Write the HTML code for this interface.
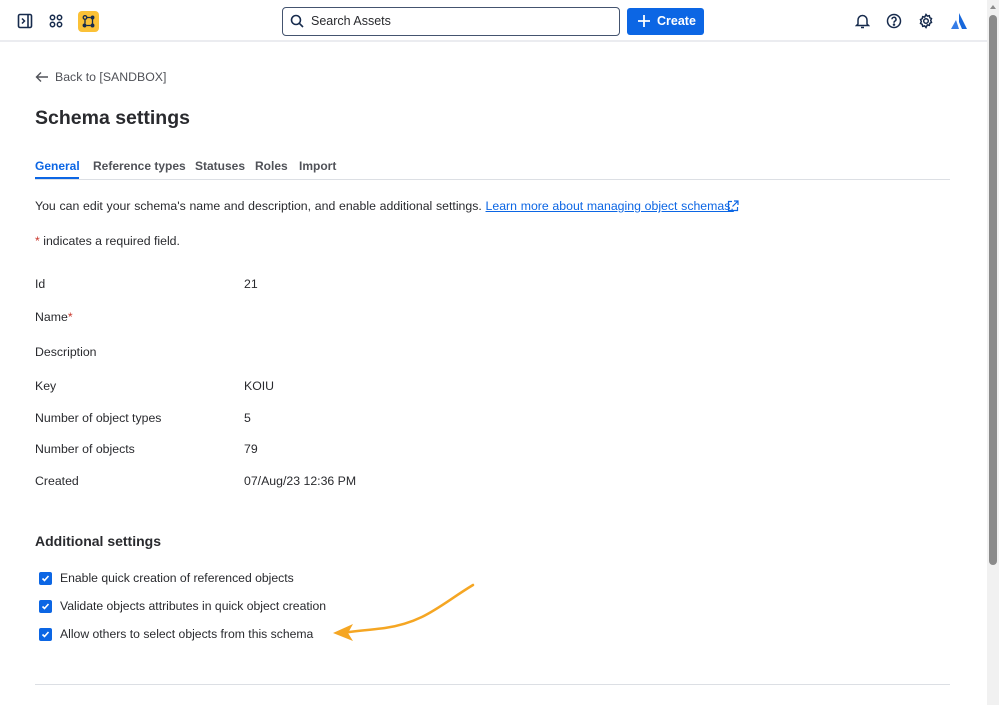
<!DOCTYPE html>
<html><head><meta charset="utf-8"><style>
*{margin:0;padding:0;box-sizing:border-box}
body{width:999px;height:705px;overflow:hidden;background:#fff;font-family:"Liberation Sans",sans-serif;color:#292a2e;position:relative;font-size:12.3px}
.a{position:absolute;white-space:nowrap}
.hdr{position:absolute;left:0;top:0;width:987px;height:42px;border-bottom:2px solid #ebecf0}
.search{position:absolute;left:282px;top:7px;width:338px;height:29px;border:1px solid #44546f;border-radius:4px;font-size:12.5px;padding:6px 0 0 28px}
.create{position:absolute;left:627px;top:8px;width:77px;height:27px;background:#0c66e4;border-radius:3px;color:#fff;font-weight:bold;font-size:12.5px;padding:6px 0 0 30px}
.tab{position:absolute;top:159px;font-size:12px;font-weight:bold;color:#505258}
.lbl{position:absolute;left:35px;font-size:12.3px}
.val{position:absolute;left:244px;font-size:12.3px}
.cb{position:absolute;left:39px;width:13px;height:13px;background:#0c66e4;border-radius:2px}
.cb svg{position:absolute;left:2px;top:2px}
.cbl{position:absolute;left:60px;font-size:12.2px}
</style></head><body>
<div class="hdr"></div>
<svg class="a" style="left:17px;top:13px" width="16" height="16" viewBox="0 0 16 16"><rect x="1.5" y="1.5" width="13" height="13" rx="1.5" fill="none" stroke="#172b4d" stroke-width="1.6"/><path d="M11 2v12" stroke="#172b4d" stroke-width="1.6"/><path d="M5 5.5l2.5 2.5L5 10.5" fill="none" stroke="#172b4d" stroke-width="1.5"/></svg>
<svg class="a" style="left:49px;top:14px" width="14" height="14" viewBox="0 0 14 14" fill="none" stroke="#172b4d" stroke-width="1.5"><circle cx="3.5" cy="3.5" r="2.2"/><circle cx="10.5" cy="3.5" r="2.2"/><circle cx="3.5" cy="10.5" r="2.2"/><circle cx="10.5" cy="10.5" r="2.2"/></svg>
<div class="a" style="left:78px;top:11px;width:21px;height:21px;background:#fbc137;border-radius:4px"></div>
<svg class="a" style="left:81px;top:14px" width="15" height="15" viewBox="0 0 15 15" fill="#172b4d" stroke="#172b4d" stroke-width="1.3"><circle cx="4" cy="3.5" r="1.8" fill="none"/><circle cx="11.5" cy="3.5" r="1.3"/><circle cx="3.5" cy="11.5" r="1.3"/><circle cx="11.5" cy="11.5" r="1.3"/><path d="M4 5.5v4M6 3.5h3.5M11.5 5v5M5.5 11.5h4" fill="none"/></svg>
<div class="search">Search Assets</div>
<svg class="a" style="left:290px;top:14px" width="14" height="14" viewBox="0 0 14 14" fill="none" stroke="#172b4d" stroke-width="1.6"><circle cx="6" cy="6" r="4.5"/><path d="M9.3 9.3L13 13"/></svg>
<div class="create">Create</div>
<svg class="a" style="left:637px;top:14px" width="14" height="14" viewBox="0 0 14 14" stroke="#fff" stroke-width="1.8"><path d="M7 1v12M1 7h12"/></svg>
<svg class="a" style="left:855px;top:13px" width="15" height="16" viewBox="0 0 15 16" fill="none" stroke="#172b4d" stroke-width="1.5"><path d="M3 11V7a4.5 4.5 0 019 0v4l1.5 1.5h-12z"/><path d="M6 14.5h3"/></svg>
<svg class="a" style="left:886px;top:13px" width="16" height="16" viewBox="0 0 16 16" fill="none" stroke="#172b4d" stroke-width="1.5"><circle cx="8" cy="8" r="6.5"/><path d="M6 6.3a2 2 0 113 1.7c-.8.5-1 .9-1 1.7"/><circle cx="8" cy="11.6" r=".5" fill="#172b4d"/></svg>
<svg class="a" style="left:918px;top:13px" width="16" height="16" viewBox="0 0 16 16" fill="none" stroke="#172b4d" stroke-width="1.5"><circle cx="8" cy="8" r="2.3"/><path d="M8 1.5l1.3 1.6 2-.5.5 2 1.7 1-0.8 1.9.8 1.9-1.7 1-.5 2-2-.5L8 14.5l-1.3-1.6-2 .5-.5-2-1.7-1 .8-1.9-.8-1.9 1.7-1 .5-2 2 .5z"/></svg>
<svg class="a" style="left:950px;top:12px" width="18" height="18" viewBox="0 0 18 18"><path d="M9 1l8 16h-5L9 10z" fill="#1868db"/><path d="M6 8L1 17h8z" fill="#357de8"/></svg>
<div class="a" style="left:987px;top:0;width:12px;height:705px;background:#f1f1f1"></div>
<div class="a" style="left:989px;top:15px;width:8px;height:550px;background:#8b8b8b;border-radius:4px"></div>
<div class="a" style="left:990px;top:5px;width:0;height:0;border-left:3px solid transparent;border-right:3px solid transparent;border-bottom:4px solid #8b8b8b"></div>

<svg class="a" style="left:35px;top:71px" width="14" height="12" viewBox="0 0 14 12" fill="none" stroke="#505258" stroke-width="1.4"><path d="M13 6H1.5M6 1.5L1.5 6 6 10.5"/></svg>
<div class="a" style="left:55px;top:70px;font-size:12.3px;color:#505258">Back to [SANDBOX]</div>
<div class="a" style="left:35px;top:107px;font-size:19.5px;font-weight:bold">Schema settings</div>
<div class="tab" style="left:35px;color:#0c66e4">General</div>
<div class="tab" style="left:93px">Reference types</div>
<div class="tab" style="left:195px">Statuses</div>
<div class="tab" style="left:255px">Roles</div>
<div class="tab" style="left:299px">Import</div>
<div class="a" style="left:35px;top:179px;width:915px;height:1px;background:#dcdfe4"></div>
<div class="a" style="left:35px;top:177px;width:44px;height:2px;background:#0c66e4"></div>

<div class="a" style="left:35px;top:199px;font-size:12.3px;width:690px;word-spacing:0.3px">You can edit your schema's name and description, and enable additional settings. <span style="color:#0c66e4;text-decoration:underline">Learn more about managing object schemas.</span></div>
<svg class="a" style="left:727px;top:200px" width="12" height="12" viewBox="0 0 12 12" fill="none" stroke="#0c66e4" stroke-width="1.2"><path d="M5 1.5H1.5v9h9V7M7 1h4v4M11 1L5.5 6.5"/></svg>
<div class="a" style="left:35px;top:234px;font-size:12.3px"><span style="color:#c9372c">*</span> indicates a required field.</div>

<div class="lbl" style="top:277px">Id</div><div class="val" style="top:277px">21</div>
<div class="lbl" style="top:310px">Name<span style="color:#c9372c">*</span></div>
<div class="lbl" style="top:345px">Description</div>
<div class="lbl" style="top:379px">Key</div><div class="val" style="top:379px">KOIU</div>
<div class="lbl" style="top:411px">Number of object types</div><div class="val" style="top:411px">5</div>
<div class="lbl" style="top:442px">Number of objects</div><div class="val" style="top:442px">79</div>
<div class="lbl" style="top:474px">Created</div><div class="val" style="top:474px">07/Aug/23 12:36 PM</div>

<div class="a" style="left:35px;top:533px;font-size:14px;font-weight:bold">Additional settings</div>
<div class="cb" style="top:572px"><svg width="9" height="9" viewBox="0 0 9 9" fill="none" stroke="#fff" stroke-width="1.6"><path d="M1.5 4.5l2 2 4-4.5"/></svg></div>
<div class="cbl" style="top:571px">Enable quick creation of referenced objects</div>
<div class="cb" style="top:600px"><svg width="9" height="9" viewBox="0 0 9 9" fill="none" stroke="#fff" stroke-width="1.6"><path d="M1.5 4.5l2 2 4-4.5"/></svg></div>
<div class="cbl" style="top:599px">Validate objects attributes in quick object creation</div>
<div class="cb" style="top:628px"><svg width="9" height="9" viewBox="0 0 9 9" fill="none" stroke="#fff" stroke-width="1.6"><path d="M1.5 4.5l2 2 4-4.5"/></svg></div>
<div class="cbl" style="top:627px">Allow others to select objects from this schema</div>

<svg class="a" style="left:330px;top:580px" width="150" height="65" viewBox="330 580 150 65"><path d="M473 585C440 605 425 622 385 628 370 630 355 631 342 633" fill="none" stroke="#f5a623" stroke-width="2.5" stroke-linecap="round"/><path d="M333 633l20-9-5 9 5 8z" fill="#f5a623"/></svg>

<div class="a" style="left:35px;top:684px;width:915px;height:1px;background:#dcdfe4"></div>
</body></html>
